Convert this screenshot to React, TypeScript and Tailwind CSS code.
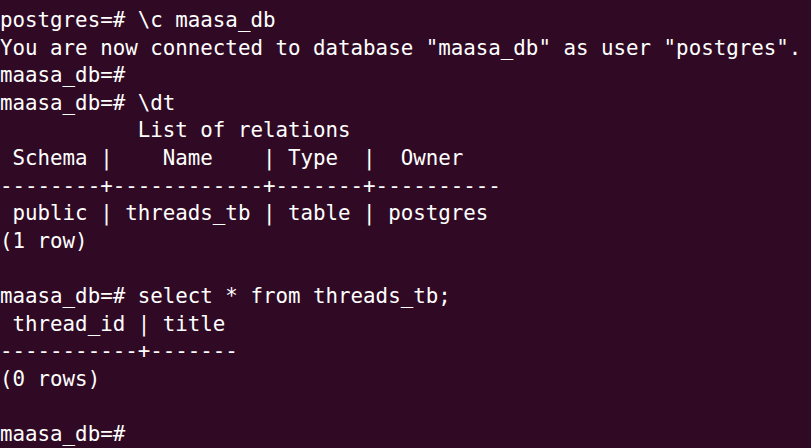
import React from "react";

const lines = [
  "postgres=# \\c maasa_db",
  'You are now connected to database "maasa_db" as user "postgres".',
  "maasa_db=#",
  "maasa_db=# \\dt",
  "           List of relations",
  " Schema |    Name    | Type  |  Owner",
  "--------+------------+-------+----------",
  " public | threads_tb | table | postgres",
  "(1 row)",
  "",
  "maasa_db=# select * from threads_tb;",
  " thread_id | title",
  "-----------+-------",
  "(0 rows)",
  "",
  "maasa_db=#",
];

export default function App() {
  return (
    <div className="w-[811px] h-[448px] overflow-hidden bg-[#300a24] text-[#ffffff] pt-[7px] pl-0">
      <pre className="m-0 font-['DejaVu_Sans_Mono',monospace] text-[20.8px] leading-[27.6px] whitespace-pre">
        {lines.map((l, i) => (
          <div key={i} className="h-[27.6px]">{l}</div>
        ))}
      </pre>
    </div>
  );
}
